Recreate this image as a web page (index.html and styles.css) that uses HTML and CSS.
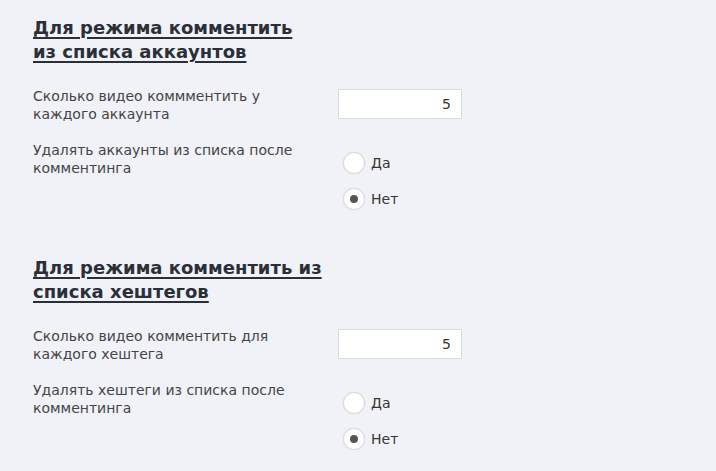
FILE: index.html
```html
<!DOCTYPE html>
<html lang="ru">
<head>
<meta charset="utf-8">
<link rel="stylesheet" href="styles.css">
</head>
<body>
<div class="page">
  <section class="group">
    <h2 class="title"><span>Для режима комментить<br>из списка аккаунтов</span></h2>
    <div class="row">
      <div class="label">Сколько видео коммментить у каждого аккаунта</div>
      <div class="control"><input class="num" type="text" value="5"></div>
    </div>
    <div class="row">
      <div class="label">Удалять аккаунты из списка после комментинга</div>
      <div class="control radios">
        <label class="radio"><span class="dot"></span>Да</label>
        <label class="radio checked"><span class="dot"></span>Нет</label>
      </div>
    </div>
  </section>
  <section class="group">
    <h2 class="title"><span>Для режима комментить из<br>списка хештегов</span></h2>
    <div class="row">
      <div class="label">Сколько видео комментить для каждого хештега</div>
      <div class="control"><input class="num" type="text" value="5"></div>
    </div>
    <div class="row">
      <div class="label">Удалять хештеги из списка после комментинга</div>
      <div class="control radios">
        <label class="radio"><span class="dot"></span>Да</label>
        <label class="radio checked"><span class="dot"></span>Нет</label>
      </div>
    </div>
  </section>
</div>
</body>
</html>
```

FILE: styles.css
```css
html, body {
  margin: 0;
  padding: 0;
  background: #f0f2f7;
}
body {
  font-family: "DejaVu Sans", Verdana, sans-serif;
  color: #444;
}
.page {
  padding: 16px 0 0 33px;
  display: flex;
  flex-direction: column;
  gap: 46px;
}
.group {
  display: flex;
  flex-direction: column;
}
.title {
  margin: 0 0 23px;
  font-size: 18px;
  line-height: 24px;
  font-weight: bold;
  color: #2b3038;
}
.title span {
  text-decoration: underline;
  text-decoration-thickness: 2px;
  text-underline-offset: 3px;
}
.row {
  display: flex;
  align-items: flex-start;
  gap: 10px;
}
.row + .row {
  margin-top: 18px;
}
.label {
  width: 295px;
  font-size: 14px;
  line-height: 18px;
}
.control {
  padding-top: 2px;
}
.num {
  box-sizing: border-box;
  width: 124px;
  height: 30px;
  margin: 0;
  border: 1px solid #d8dce3;
  background: #fff;
  text-align: right;
  padding: 0 10px;
  font-family: "DejaVu Sans", Verdana, sans-serif;
  font-size: 14px;
  color: #333;
  outline: none;
}
.radios {
  padding-top: 11px;
  display: flex;
  flex-direction: column;
  gap: 14px;
  margin-left: 5px;
}
.radio {
  display: flex;
  align-items: center;
  gap: 6px;
  font-size: 14px;
  line-height: 22px;
  color: #363636;
}
.dot {
  box-sizing: border-box;
  width: 22px;
  height: 22px;
  border-radius: 50%;
  background: #fff;
  border: 1px solid #dcdde0;
  box-shadow: 0 0 1px rgba(0,0,0,0.15);
  display: flex;
  align-items: center;
  justify-content: center;
}
.radio.checked .dot::after {
  content: "";
  width: 8px;
  height: 8px;
  border-radius: 50%;
  background: #555;
}
```
